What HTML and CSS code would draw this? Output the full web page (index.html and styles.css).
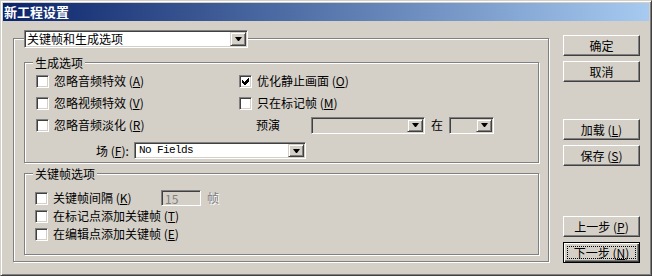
FILE: index.html
```html
<!DOCTYPE html>
<html lang="zh-CN">
<head>
    <meta charset="UTF-8">
    <title>新工程设置</title>
    <link rel="stylesheet" href="styles.css">
</head>
<body>
<div class="window">
    <div class="titlebar">新工程设置</div>

    <div class="dialog">
        <div class="panel">
            <div class="combo combo-head">
                <span class="combo-text">关键帧和生成选项</span>
                <span class="drop"><i class="arrow"></i></span>
            </div>

            <!-- 生成选项 -->
            <div class="group group-gen">
                <div class="caption">生成选项</div>
                <div class="row">
                    <div class="check col-left"><span class="cb"></span>忽略音频特效 (<u>A</u>)</div>
                    <div class="check"><span class="cb"><svg class="tick" width="7" height="7" viewBox="0 0 7 7"><path d="M6 0h1v3L3 7H2L0 5V2l2 2z"/></svg></span>优化静止画面 (<u>O</u>)</div>
                </div>
                <div class="row">
                    <div class="check col-left"><span class="cb"></span>忽略视频特效 (<u>V</u>)</div>
                    <div class="check"><span class="cb"></span>只在标记帧 (<u>M</u>)</div>
                </div>
                <div class="row">
                    <div class="check col-left"><span class="cb"></span>忽略音频淡化 (<u>R</u>)</div>
                    <div class="preview">
                        <span class="preview-label">预演</span>
                        <div class="combo combo-off select-preview"><span class="combo-text"></span><span class="drop"><i class="arrow"></i></span></div>
                        <span class="at">在</span>
                        <div class="combo combo-off select-small"><span class="combo-text"></span><span class="drop"><i class="arrow"></i></span></div>
                    </div>
                </div>
                <div class="row row-field">
                    <span class="field-label">场 (<u>F</u>):</span>
                    <div class="combo select-field"><span class="combo-text mono">No Fields</span><span class="drop"><i class="arrow"></i></span></div>
                </div>
            </div>

            <!-- 关键帧选项 -->
            <div class="group group-key">
                <div class="caption">关键帧选项</div>
                <div class="row row-key first">
                    <div class="check col-key"><span class="cb"></span>关键帧间隔 (<u>K</u>)</div>
                    <div class="num-input">15</div>
                    <span class="unit">帧</span>
                </div>
                <div class="row row-key">
                    <div class="check"><span class="cb"></span>在标记点添加关键帧 (<u>T</u>)</div>
                </div>
                <div class="row row-key">
                    <div class="check"><span class="cb"></span>在编辑点添加关键帧 (<u>E</u>)</div>
                </div>
            </div>
        </div>

        <div class="side">
            <button class="btn">确定</button>
            <button class="btn gap-s">取消</button>
            <button class="btn gap-load">加载 (<u>L</u>)</button>
            <button class="btn gap-s">保存 (<u>S</u>)</button>
            <button class="btn gap-step">上一步 (<u>P</u>)</button>
            <button class="btn btn-default gap-s"><span class="focus">下一步 (<u>N</u>)</span></button>
        </div>
    </div>
</div>
</body>
</html>
```

FILE: styles.css
```css
*{
    margin: 0;
    padding: 0;
    box-sizing: border-box;
}

body{
    background: #d4d0c8;
    font-family: "Noto Sans CJK SC", "Liberation Sans", sans-serif;
    font-size: 12px;
    line-height: 14px;
    color: #000;
}

u{
    text-decoration: underline;
}

.window{
    width: 652px;
    height: 276px;
    border: 1px solid;
    border-color: #d4d0c8 #404040 #404040 #d4d0c8;
    box-shadow: inset 1px 1px #fff, inset -1px -1px #808080;
    padding: 2px;
}

.titlebar{
    height: 18px;
    background: linear-gradient(to right, #0a246a, #a6caf0);
    color: #fff;
    font-weight: bold;
    font-size: 13px;
    line-height: 18px;
    padding-left: 1px;
}

.dialog{
    display: flex;
    padding-left: 10px;
}

/* etched frame */
.panel{
    width: 536px;
    height: 224px;
    margin-top: 17px;
    border: 1px solid #808080;
    box-shadow: inset 1px 1px #fff, 1px 1px #fff;
    padding-left: 10px;
}

.group{
    width: 515px;
    border: 1px solid #808080;
    box-shadow: inset 1px 1px #fff, 1px 1px #fff;
}

.group-gen{
    margin-top: 14px;
    height: 101px;
    padding-left: 11px;
}

.group-key{
    margin-top: 10px;
    height: 82px;
    padding-left: 10px;
}

.caption{
    width: fit-content;
    margin: -7px 0 0 -3px;
    padding: 0 2px;
    background: #d4d0c8;
}

.group-key .caption{
    margin-left: -2px;
}

/* combo boxes */
.combo{
    display: flex;
    height: 18px;
    border: 1px solid;
    border-color: #808080 #fff #fff #808080;
    box-shadow: inset 1px 1px #404040, inset -1px -1px #d4d0c8;
    background: #fff;
    padding: 1px;
}

.combo-head{
    width: 224px;
    margin-top: -9px;
}

.combo-text{
    flex: 1;
    padding-left: 1px;
    white-space: nowrap;
}

.combo-off{
    background: #d4d0c8;
    height: 17px;
}

.drop{
    width: 16px;
    flex-shrink: 0;
    display: flex;
    align-items: center;
    justify-content: center;
    background: #d4d0c8;
    border: 1px solid;
    border-color: #d4d0c8 #404040 #404040 #d4d0c8;
    box-shadow: inset 1px 1px #fff, inset -1px -1px #808080;
}

.arrow{
    width: 1px;
    height: 0;
    border-top: 4px solid #000;
    border-left: 3px solid transparent;
    border-right: 3px solid transparent;
    box-sizing: content-box;
}

/* rows and checkboxes */
.row{
    display: flex;
    align-items: center;
    height: 22px;
    white-space: nowrap;
}

.row u{
    letter-spacing: 0;
}

.row-key{
    height: 18px;
}

.row-key.first{
    margin-top: 8px;
}

.col-left{
    width: 203px;
}

.col-key{
    width: 126px;
}

.check{
    display: flex;
    align-items: center;
    white-space: pre;
}

.cb{
    width: 13px;
    height: 13px;
    flex-shrink: 0;
    margin-right: 5px;
    display: flex;
    align-items: center;
    justify-content: center;
    background: #fff;
    border: 1px solid;
    border-color: #808080 #fff #fff #808080;
    box-shadow: inset 1px 1px #404040, inset -1px -1px #d4d0c8;
}

.tick{
    display: block;
    shape-rendering: crispEdges;
}

.preview{
    display: flex;
    align-items: center;
    padding-left: 17px;
}

.preview-label{
    width: 55px;
}

.select-preview{
    width: 114px;
}

.at{
    margin: 0 6px;
}

.select-small{
    width: 45px;
}

.row-field{
    height: 17px;
    margin-top: 6px;
    padding-left: 60px;
}

.field-label{
    width: 38px;
    white-space: pre;
}

.select-field{
    width: 172px;
    height: 17px;
}

.mono{
    font-family: "Liberation Mono", monospace;
    font-size: 11px;
    letter-spacing: -0.6px;
    padding-left: 3px;
    line-height: 13px;
}

.num-input{
    width: 40px;
    height: 16px;
    border: 1px solid;
    border-color: #808080 #fff #fff #808080;
    box-shadow: inset 1px 1px #404040, inset -1px -1px #d4d0c8;
    background: #d4d0c8;
    color: #808080;
    padding: 1px 0 0 3px;
    line-height: 13px;
}

.unit{
    margin-left: 6px;
    color: #808080;
    text-shadow: 1px 1px #fff;
}

/* buttons */
.side{
    display: flex;
    flex-direction: column;
    margin-left: 14px;
    padding-top: 14px;
}

.btn{
    width: 77px;
    height: 21px;
    font: inherit;
    color: #000;
    line-height: 19px;
    text-align: center;
    white-space: pre;
    background: #d4d0c8;
    border: 1px solid;
    border-color: #fff #404040 #404040 #fff;
    box-shadow: inset -1px -1px #808080;
}

.gap-s{
    margin-top: 5px;
}

.gap-load{
    margin-top: 37px;
}

.gap-step{
    margin-top: 50px;
}

.btn-default{
    display: flex;
    padding: 3px;
    border-color: #000;
    box-shadow: inset 1px 1px #fff, inset -1px -1px #404040, inset -2px -2px #808080;
}

.focus{
    flex: 1;
    border: 1px dotted #000;
    line-height: 11px;
}
```
